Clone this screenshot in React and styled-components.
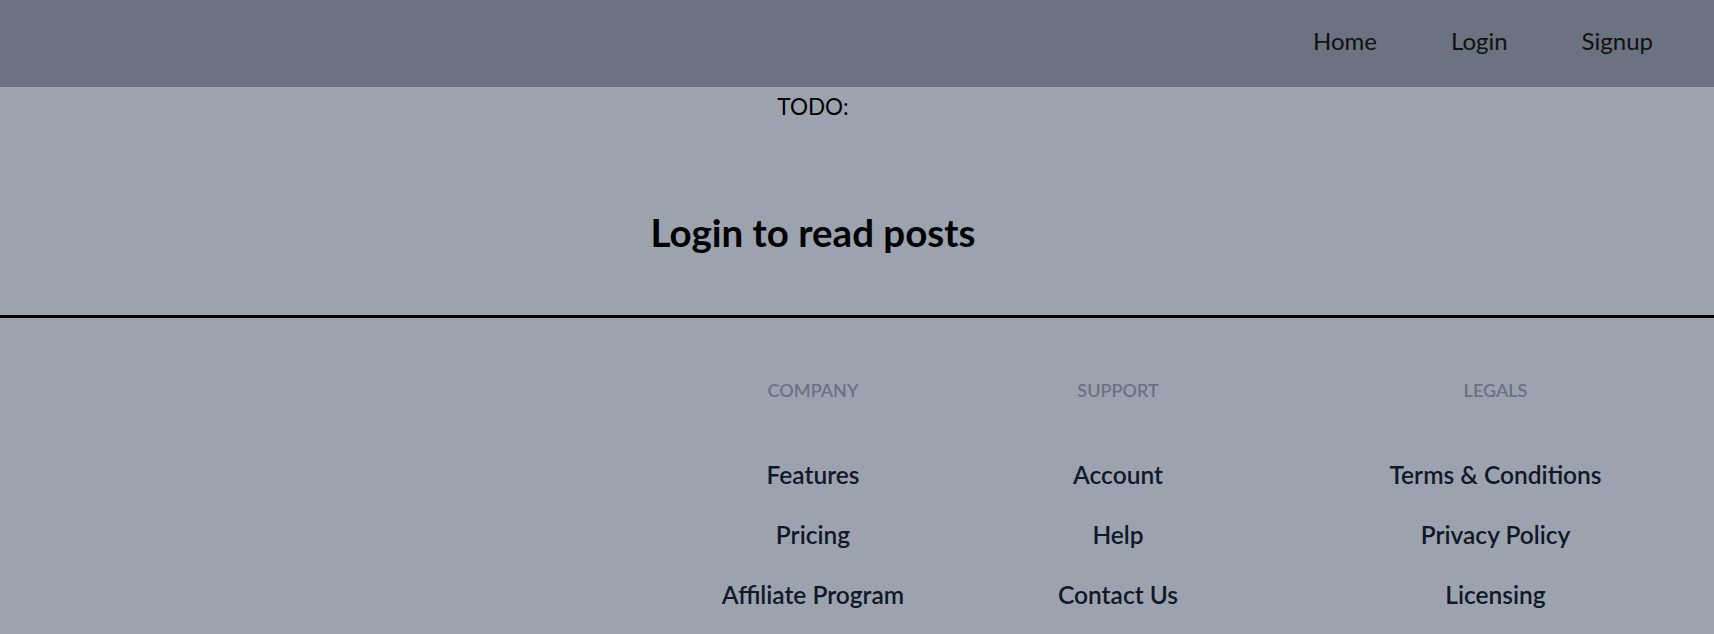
import React from 'react'
import styled, { createGlobalStyle } from 'styled-components'

const GlobalStyle = createGlobalStyle`
  html, body {
    margin: 0;
    padding: 0;
    background: #9ca3af;
    font-family: Lato, 'Noto Sans', sans-serif;
  }
`

const navLinks = ['Home', 'Login', 'Signup']

const footerColumns = [
  { title: 'COMPANY', links: ['Features', 'Pricing', 'Affiliate Program'] },
  { title: 'SUPPORT', links: ['Account', 'Help', 'Contact Us'] },
  { title: 'LEGALS', links: ['Terms & Conditions', 'Privacy Policy', 'Licensing'] },
]

export default function App() {
  return (
    <Page>
      <GlobalStyle />
      <Header>
        <Nav>
          {navLinks.map((link) => (
            <NavLink key={link} href="#">
              {link}
            </NavLink>
          ))}
        </Nav>
      </Header>

      <Main>
        <Todo>TODO:</Todo>
        <Title>Login to read posts</Title>
      </Main>

      <Footer>
        <Spacer />
        {footerColumns.map((col) => (
          <Column key={col.title}>
            <ColumnTitle>{col.title}</ColumnTitle>
            <LinkList>
              {col.links.map((link) => (
                <FooterLink key={link} href="#">
                  {link}
                </FooterLink>
              ))}
            </LinkList>
          </Column>
        ))}
      </Footer>
    </Page>
  )
}

const Page = styled.div`
  min-height: 100vh;
  background: #9ca3af;
`

const Header = styled.header`
  height: 87px;
  background: #6b7280;
  display: flex;
  justify-content: flex-end;
  align-items: center;
  padding-right: 61px;
`

const Nav = styled.nav`
  display: flex;
  align-items: center;
  gap: 74px;
`

const NavLink = styled.a`
  font-size: 24px;
  line-height: 32px;
  color: #111111;
  text-decoration: none;
  margin-top: -6px;
`

const Main = styled.main`
  display: flex;
  flex-direction: column;
  align-items: center;
  padding-right: 88px;
  padding-bottom: 63px;
  border-bottom: 3px solid #000;
`

const Todo = styled.p`
  margin: 4px 0 0;
  font-size: 22.5px;
  line-height: 32px;
  color: #000;
`

const Title = styled.h1`
  margin: 89px 0 0;
  font-size: 38.5px;
  line-height: 40px;
  font-weight: 700;
  color: #000;
`

const Footer = styled.footer`
  display: grid;
  grid-template-columns: 667px 292px 318px 1fr;
  justify-items: center;
  padding-top: 58px;
  padding-bottom: 40px;
`

const Spacer = styled.div``

const Column = styled.div`
  display: flex;
  flex-direction: column;
  align-items: center;
`

const ColumnTitle = styled.h2`
  margin: 0;
  font-size: 18px;
  line-height: 28px;
  font-weight: 600;
  color: #6b7280;
  text-transform: uppercase;
`

const LinkList = styled.ul`
  list-style: none;
  margin: 55px 0 0;
  padding: 0;
  display: flex;
  flex-direction: column;
  align-items: center;
  gap: 28px;
`

const FooterLink = styled.a`
  display: block;
  font-size: 24.5px;
  line-height: 32px;
  font-weight: 600;
  color: #111827;
  text-decoration: none;
  white-space: nowrap;
`
